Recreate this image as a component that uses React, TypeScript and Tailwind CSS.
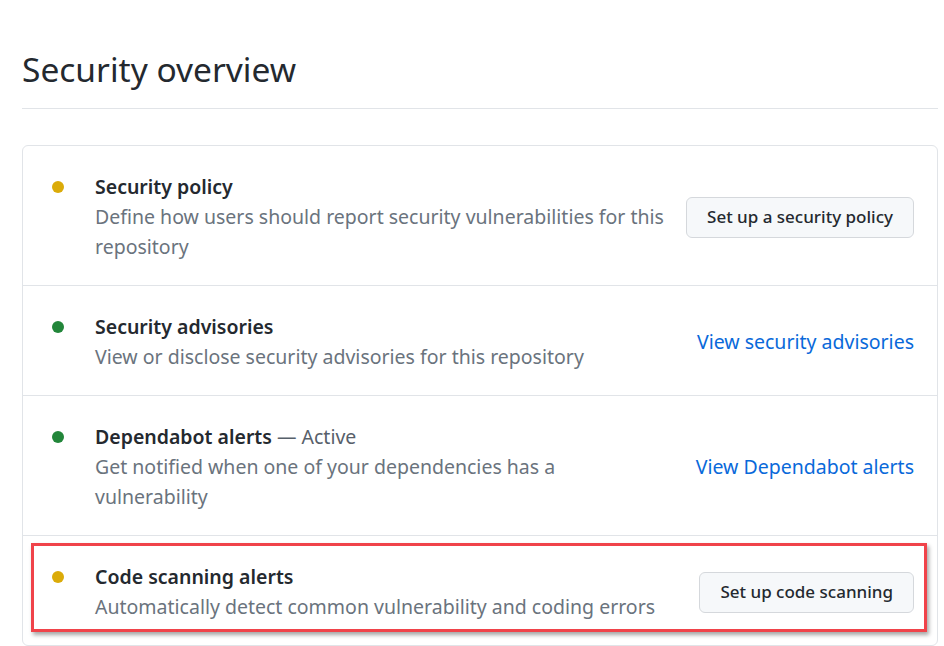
import React from 'react';

interface Feature {
  title: string;
  suffix?: string;
  description: string;
  status: 'warn' | 'ok';
  action: { kind: 'button' | 'link'; label: string };
  highlight?: boolean;
}

const features: Feature[] = [
  {
    title: 'Security policy',
    description: 'Define how users should report security vulnerabilities for this repository',
    status: 'warn',
    action: { kind: 'button', label: 'Set up a security policy' },
  },
  {
    title: 'Security advisories',
    description: 'View or disclose security advisories for this repository',
    status: 'ok',
    action: { kind: 'link', label: 'View security advisories' },
  },
  {
    title: 'Dependabot alerts',
    suffix: ' — Active',
    description: 'Get notified when one of your dependencies has a vulnerability',
    status: 'ok',
    action: { kind: 'link', label: 'View Dependabot alerts' },
  },
  {
    title: 'Code scanning alerts',
    description: 'Automatically detect common vulnerability and coding errors',
    status: 'warn',
    action: { kind: 'button', label: 'Set up code scanning' },
    highlight: true,
  },
];

const FeatureRow = ({ feature, first }: { feature: Feature; first: boolean }) => (
  <div
    className={`relative flex items-center gap-[16px] pt-[26px] pb-[23px] pl-[29px] pr-[23px] ${
      first ? '' : 'border-t border-[#e1e4e8]'
    }`}
  >
    <div className="flex flex-1 min-w-0 items-start">
      <span
        className={`mt-[9px] h-[12px] w-[12px] shrink-0 rounded-full ${
          feature.status === 'warn' ? 'bg-[#dbab09]' : 'bg-[#22863a]'
        }`}
      />
      <div className="ml-[31px] flex-1 leading-[30px]">
        <div className="text-[19.5px] text-[#24292f]">
          <span className="font-semibold">{feature.title}</span>
          {feature.suffix && <span className="text-[#57606a]">{feature.suffix}</span>}
        </div>
        <p className="max-w-[574px] text-[19.5px] text-[#6a737d]">{feature.description}</p>
      </div>
    </div>
    {feature.action.kind === 'button' ? (
      <button className="h-[41px] shrink-0 rounded-[6px] border border-[#d5d8dc] bg-[#f6f8fa] px-[20px] text-[17px] font-medium text-[#24292f]">
        {feature.action.label}
      </button>
    ) : (
      <a href="#" className="shrink-0 text-[19.5px] text-[#0969da]">
        {feature.action.label}
      </a>
    )}
    {feature.highlight && (
      <div className="pointer-events-none absolute left-[8px] right-[10px] top-[7px] h-[89px] border-[3px] border-[#f0434a] shadow-[2px_3px_4px_rgba(0,0,0,0.35)]" />
    )}
  </div>
);

const App = () => {
  return (
    <div
      className="min-h-screen bg-white pl-[22px] pr-[6px] pt-[44px]"
      style={{ fontFamily: '"Noto Sans", "Open Sans", sans-serif' }}
    >
      <h1 className="border-b border-[#e1e4e8] pb-[14px] text-[33.5px] font-normal leading-[50px] text-[#24292f]">
        Security overview
      </h1>
      <div className="mt-[36px] overflow-hidden rounded-[6px] border border-[#e1e4e8]">
        {features.map((f, i) => (
          <FeatureRow key={f.title} feature={f} first={i === 0} />
        ))}
      </div>
    </div>
  );
};

export default App;
